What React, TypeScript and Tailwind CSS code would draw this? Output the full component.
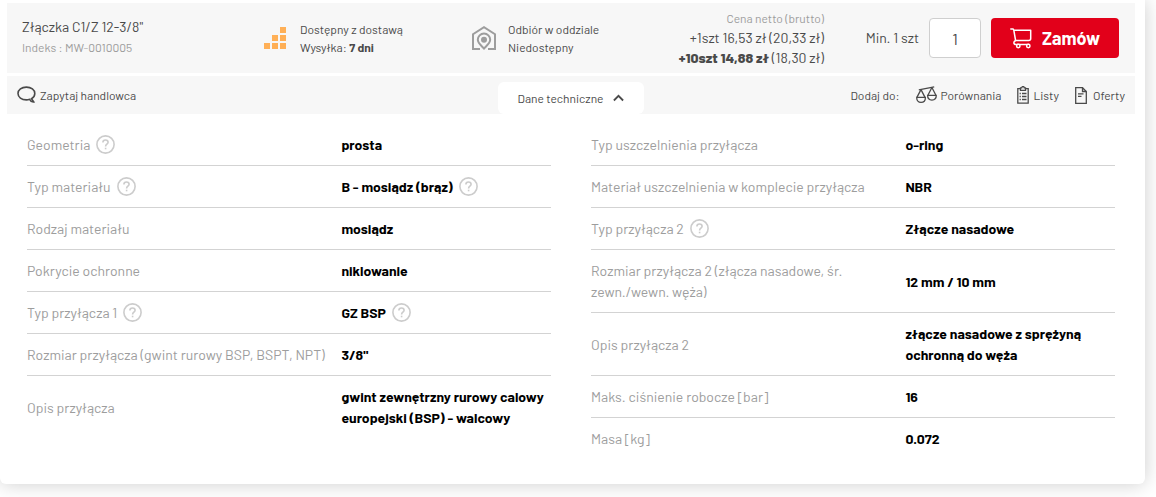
import { useState } from "react";

type Spec = {
  name: string;
  value: string;
  nameHelp?: boolean;
  valueHelp?: boolean;
};

const leftSpecs: Spec[] = [
  { name: "Geometria", value: "prosta", nameHelp: true },
  { name: "Typ materiału", value: "B - mosiądz (brąz)", nameHelp: true, valueHelp: true },
  { name: "Rodzaj materiału", value: "mosiądz" },
  { name: "Pokrycie ochronne", value: "niklowanie" },
  { name: "Typ przyłącza 1", value: "GZ BSP", nameHelp: true, valueHelp: true },
  { name: "Rozmiar przyłącza (gwint rurowy BSP, BSPT, NPT)", value: '3/8"' },
  { name: "Opis przyłącza", value: "gwint zewnętrzny rurowy calowy europejski (BSP) - walcowy" },
];

const rightSpecs: Spec[] = [
  { name: "Typ uszczelnienia przyłącza", value: "o-ring" },
  { name: "Materiał uszczelnienia w komplecie przyłącza", value: "NBR" },
  { name: "Typ przyłącza 2", value: "Złącze nasadowe", nameHelp: true },
  { name: "Rozmiar przyłącza 2 (złącza nasadowe, śr. zewn./wewn. węża)", value: "12 mm / 10 mm" },
  { name: "Opis przyłącza 2", value: "złącze nasadowe z sprężyną ochronną do węża" },
  { name: "Maks. ciśnienie robocze [bar]", value: "16" },
  { name: "Masa [kg]", value: "0.072" },
];

function StockIcon() {
  return (
    <svg width="24" height="22" viewBox="0 0 24 22" fill="#ffb057" className="shrink-0">
      <path d="M16 0h6v6h-6zM8 8h6v6H8zM16 8h6v6h-6zM0 16h6v6H0zM8 16h6v6H8zM16 16h6v6h-6z" />
    </svg>
  );
}

function BranchIcon() {
  return (
    <svg width="24" height="24" viewBox="0 0 24 24" fill="none" stroke="#9d9d9d" strokeWidth="2" className="shrink-0">
      <path d="M8 23H1V8.2L12 1.2l11 7V23h-7" />
      <path d="M12 22.6C9 19.4 5.8 17 5.8 13.8a6.2 6.2 0 0 1 12.4 0c0 3.2-3.2 5.6-6.2 8.8z" />
      <circle cx="12" cy="13.8" r="3" fill="#9d9d9d" stroke="none" />
    </svg>
  );
}

function CartIcon() {
  return (
    <svg width="22" height="21" viewBox="0 0 22 21" fill="none" stroke="#fff" strokeWidth="1.5" strokeLinecap="round" strokeLinejoin="round">
      <path d="M.8 1h2.400l.6 1.200h16.900v8.300a2 2 0 0 1-2 2H5.600L3.800 2.200" />
      <path d="M5.600 12.500c-2.400 1-2.400 4 .6 4h12.600" />
      <circle cx="8.300" cy="18" r="1.700" fill="#e2001a" />
      <circle cx="18.300" cy="18" r="1.700" fill="#e2001a" />
    </svg>
  );
}

function ChatIcon() {
  return (
    <svg width="19" height="18" viewBox="0 0 19 18" fill="none" stroke="#4a4a4a" strokeWidth="1.6" strokeLinecap="round">
      <path d="M12.600 13.300c-1 .4-2.100.6-3.200.6C4.600 13.900 1 11.100 1 7.500S4.600 1.100 9.400 1.100s8.400 2.800 8.400 6.400c0 2.200-1.300 4.100-3.300 5.200l2.200 3.200c-1.800.2-3.100-.6-4.100-2.600" />
    </svg>
  );
}

function ScalesIcon() {
  return (
    <svg width="21" height="18" viewBox="0 0 21 18" fill="none" stroke="#4a4a4a" strokeWidth="1.3" strokeLinejoin="round">
      <path d="M2.800 3.900 18.200.9" />
      <path d="M5 3.600.9 11.400M5 3.600l4 7.800M15.900 1.500l-4 7.800M15.900 1.500l4 7.800" />
      <path d="M.700 11.400h8.700c0 3.200-1.800 5-4.400 5s-4.300-1.800-4.300-5zM11.600 9.300h8.700c0 3-1.800 4.800-4.400 4.800s-4.300-1.800-4.300-4.800z" />
    </svg>
  );
}

function ListIcon() {
  return (
    <svg width="12" height="18" viewBox="0 0 12 18" fill="none" stroke="#4a4a4a" strokeWidth="1.300">
      <path d="M3.500 2.600H.8v14.600h10.400V2.600H8.500" />
      <path d="M3.500 1.800h1.200a1.300 1.300 0 0 1 2.600 0h1.200v2.600h-5z" />
      <path d="M2.600 7.500h1.200M5 7.500h4.500M2.600 10.500h1.200M5 10.500h4.500M2.600 13.500h1.200M5 13.500h4.500" strokeWidth="1.500" />
    </svg>
  );
}

function OfferIcon() {
  return (
    <svg width="12" height="17" viewBox="0 0 12 17" fill="none" stroke="#4a4a4a" strokeWidth="1.3">
      <path d="M.7.7h6.800l3.800 3.800v11.800H.7z" />
      <path d="M7.500.7v3.800h3.800M3 6.800h5.500M3 9.300h3.500" />
    </svg>
  );
}

function HelpButton() {
  return (
    <button type="button" aria-label="Pomoc" className="-mt-1.5 -mb-0.5 ml-1.5 inline-block cursor-pointer align-middle">
      <svg width="19" height="19" viewBox="0 0 19 19" fill="none" stroke="#cccccc" strokeWidth="1.6" className="block">
        <circle cx="9.5" cy="9.5" r="8.600" />
        <path d="M6.900 7.500c0-1.600 1-2.500 2.600-2.500s2.600.9 2.600 2.300c0 1.900-2.500 1.900-2.500 4.100" />
        <path d="M9.600 12.700v1.600" />
      </svg>
    </button>
  );
}

function SpecTable({ specs }: { specs: Spec[] }) {
  return (
    <table className="w-full table-fixed border-separate border-spacing-0 self-start text-left text-sm leading-[21px]">
      <tbody>
        {specs.map((s, i) => {
          const line = i < specs.length - 1 ? "border-b border-[#d3d3d3]" : "";
          return (
            <tr key={s.name}>
              <th scope="row" className={`w-3/5 py-2.5 font-normal text-[#9d9d9d] ${line}`}>
                {s.name}
                {s.nameHelp && <HelpButton />}
              </th>
              <td className={`py-2.5 font-bold text-black ${line}`}>
                {s.value}
                {s.valueHelp && <HelpButton />}
              </td>
            </tr>
          );
        })}
      </tbody>
    </table>
  );
}

export default function App() {
  const [qty, setQty] = useState("1");
  const [open, setOpen] = useState(true);

  return (
    <div className="overflow-hidden bg-white pr-[11px] pb-[13px] font-['Barlow','Roboto',sans-serif] text-[#4a4a4a]">
      <div className="rounded-b-md bg-white pt-[3px] pr-2.5 pb-[25px] pl-[7px] shadow-[0_0_20px_rgba(0,0,0,0.2)]">
        <div className="grid h-[70px] grid-cols-[242fr_208fr_353fr_294fr] items-center bg-[#f7f7f7] pr-4 pl-[15px]">
          <div className="pb-0.5">
            <h2 className="text-sm leading-5">Złączka C1/Z 12-3/8"</h2>
            <p className="text-xs leading-5 text-[#9d9d9d]">Indeks : MW-0010005</p>
          </div>
          <div className="flex items-center gap-3 text-xs leading-[18px]">
            <StockIcon />
            <p>
              Dostępny z dostawą
              <br />
              Wysyłka: <b>7 dni</b>
            </p>
          </div>
          <div className="flex items-center justify-between">
            <div className="flex items-center gap-3 text-xs leading-[18px]">
              <BranchIcon />
              <p>
                Odbiór w oddziale
                <br />
                Niedostępny
              </p>
            </div>
            <div className="pr-px pb-px text-right text-sm leading-5">
              <p className="text-xs leading-5 text-[#9d9d9d]">Cena netto (brutto)</p>
              <p>+1szt 16,53 zł (20,33 zł)</p>
              <p>
                <b className="font-extrabold">+10szt 14,88 zł</b> (18,30 zł)
              </p>
            </div>
          </div>
          <div className="flex items-center justify-end gap-2.5">
            <label htmlFor="qty" className="text-sm">
              Min. 1 szt
            </label>
            <input
              id="qty"
              value={qty}
              onChange={(e) => setQty(e.target.value)}
              className="h-10 w-[52px] rounded-sm border border-[#cfcfcf] bg-white text-center text-base"
            />
            <button type="button" className="flex h-10 w-32 cursor-pointer items-center justify-center gap-2.5 rounded bg-[#e2001a] text-lg font-bold text-white">
              <CartIcon />
              Zamów
            </button>
          </div>
        </div>

        <div className="mt-[3px] grid h-[38px] grid-cols-[1fr_auto_1fr] items-center bg-[#f7f7f7] px-2.5 text-xs">
          <a href="#ask" className="flex items-center gap-1">
            <ChatIcon />
            Zapytaj handlowca
          </a>
          <button
            type="button"
            aria-expanded={open}
            onClick={() => setOpen(!open)}
            className="flex h-8 w-[146px] cursor-pointer items-center justify-center gap-2.5 self-end rounded-md bg-white"
          >
            Dane techniczne
            <svg width="11" height="8" viewBox="0 0 11 8" fill="none" stroke="#4a4a4a" strokeWidth="1.800" className={open ? "" : "rotate-180"}>
              <path d="m.9 6.500 4.600-4.700 4.600 4.700" />
            </svg>
          </button>
          <div className="flex items-center justify-end gap-4">
            <span>Dodaj do:</span>
            <a href="#compare" className="flex items-center gap-1">
              <ScalesIcon />
              Porównania
            </a>
            <a href="#lists" className="flex items-center gap-1">
              <ListIcon />
              Listy
            </a>
            <a href="#offers" className="flex items-center gap-1.5">
              <OfferIcon />
              Oferty
            </a>
          </div>
        </div>

        {open && (
          <div className="grid grid-cols-2 gap-10 px-5 pt-2.5">
            <SpecTable specs={leftSpecs} />
            <SpecTable specs={rightSpecs} />
          </div>
        )}
      </div>
    </div>
  );
}
